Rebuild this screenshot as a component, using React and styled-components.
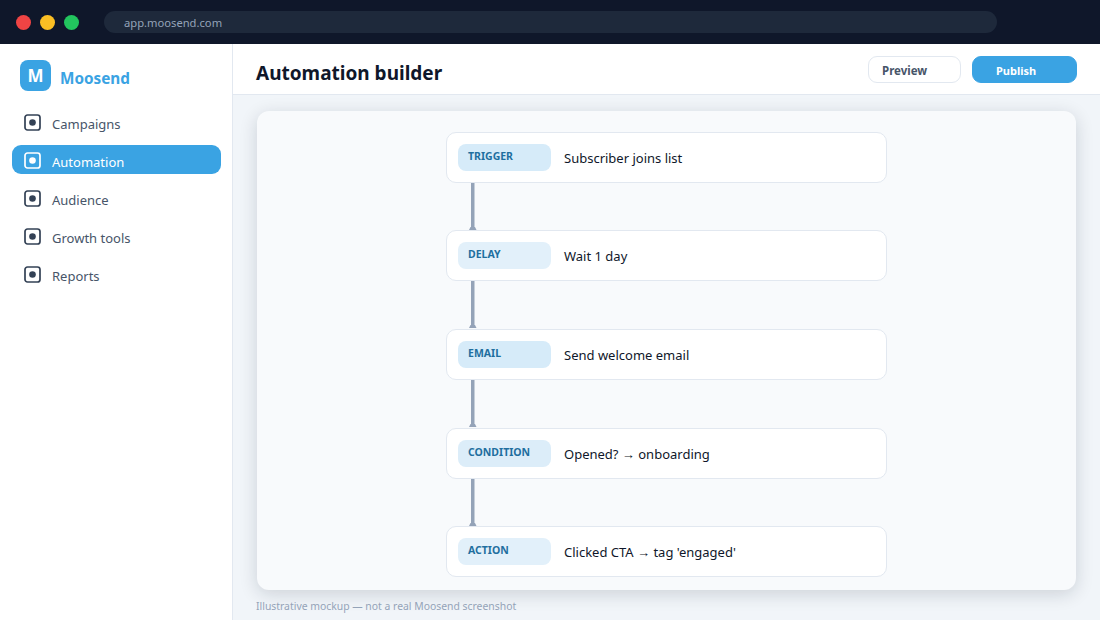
import React from 'react';
import styled, { createGlobalStyle } from 'styled-components';

const Global = createGlobalStyle`
  html, body { margin: 0; padding: 0; width: 1100px; height: 620px; overflow: hidden; background: #fff; }
  body { font-family: "Noto Sans", "Open Sans", sans-serif; }
  * { box-sizing: border-box; }
`;

const Page = styled.div`width: 1100px; height: 620px; display: flex; flex-direction: column;`;
const Chrome = styled.div`height: 44px; background: #0f172a; display: flex; align-items: center; padding: 0 103px 0 16px;`;
const Dots = styled.div`display: flex; gap: 9px; margin-right: 25px;`;
const Dot = styled.span`width: 15px; height: 15px; border-radius: 50%; background: ${p => p.$c};`;
const Url = styled.div`flex: 1; height: 22px; border-radius: 11px; background: #1e293b; color: #94a3b8; font-size: 11.2px; line-height: 24px; padding-left: 20px;`;
const Body = styled.div`flex: 1; display: flex; min-height: 0;`;
const Side = styled.aside`width: 233px; background: #fff; border-right: 1px solid #e2e8f0; padding: 16px 11px 0 12px; display: flex; flex-direction: column;`;
const Brand = styled.div`display: flex; align-items: center; gap: 9px; padding-left: 8px; height: 31px; margin-bottom: 16px;`;
const Logo = styled.div`width: 31px; height: 31px; border-radius: 8px; background: #3aa3e3; color: #fff; font-weight: 700; font-size: 17px; display: flex; align-items: center; justify-content: center; padding-bottom: 1px;`;
const BrandName = styled.div`color: #3aa3e3; font-weight: 700; font-size: 15.3px; padding-top: 4px;`;
const Nav = styled.nav`display: flex; flex-direction: column; gap: 9px;`;
const Item = styled.div`height: 29px; border-radius: 9px; display: flex; align-items: center; gap: 11px; padding-left: 12px; font-size: 13px; background: ${p => p.$active ? '#3aa3e3' : 'transparent'}; color: ${p => p.$active ? '#fff' : '#475569'};`;
const ItemLabel = styled.span`padding-top: 4px;`;
const IconSvg = styled.svg`width: 17px; height: 17px; flex: none; margin-top: 2px;`;
const Main = styled.main`flex: 1; display: flex; flex-direction: column; min-width: 0; background: #f1f5f9;`;
const Head = styled.header`height: 51px; background: #fff; border-bottom: 1px solid #e2e8f0; display: flex; align-items: center; padding: 0 23px 0 23px;`;
const Title = styled.h1`margin: 8px 0 0; flex: 1; font-size: 19px; font-weight: 700; color: #0f172a;`;
const Btn = styled.button`height: 27px; border-radius: 9px; font-family: inherit; font-weight: 700; text-align: left; padding: 3px 0 0 ${p => p.$primary ? '23px' : '13px'}; font-size: ${p => p.$primary ? '11px' : '11.5px'}; width: ${p => p.$primary ? '105px' : '93px'}; margin-left: ${p => p.$primary ? '11px' : '0'}; background: ${p => p.$primary ? '#3aa3e3' : '#fff'}; color: ${p => p.$primary ? '#fff' : '#475569'}; border: 1px solid ${p => p.$primary ? '#3aa3e3' : '#e2e8f0'};`;
const Canvas = styled.div`flex: 1; padding: 16px 24px 0 24px; display: flex; flex-direction: column; min-height: 0;`;
const Board = styled.section`height: 479px; border-radius: 12px; background: #f8fafc; box-shadow: 0 4px 18px rgba(15, 23, 42, .16); display: flex; flex-direction: column; align-items: center; justify-content: space-between; padding: 20.9px 0 12.9px;`;
const Node = styled.div`width: 441px; height: 51px; flex: none; background: #fff; border: 1px solid #e2e8f0; border-radius: 10px; display: flex; align-items: center; padding-left: 11px; gap: 13px; position: relative;`;
const Tag = styled.span`width: 93px; height: 27px; border-radius: 8px; background: ${p => p.$bg}; color: #1f6f9f; font-size: 10.5px; font-weight: 700; padding: 5px 0 0 10px; line-height: 15px;`;
const Label = styled.span`font-size: 13px; color: #0f172a; padding-top: 1px;`;
const Wire = styled.svg`position: absolute; left: 21px; top: 50px; width: 10px; height: 47px;`;
const Note = styled.div`font-size: 10.4px; color: #94a3b8; padding-top: 9px; margin-left: -1px;`;

const Icon = ({ active }) => {
  const c = active ? '#fff' : '#334155';
  return (
    <IconSvg viewBox="0 0 17 17">
      <rect x="1" y="1" width="15" height="15" rx="2.5" fill="none" stroke={c} strokeWidth="1.7" />
      <circle cx="8.5" cy="8.5" r="3.3" fill={c} />
    </IconSvg>
  );
};

const nav = ['Campaigns', 'Automation', 'Audience', 'Growth tools', 'Reports'];
const steps = [
  ['TRIGGER', 'Subscriber joins list', '#d6ebf9'],
  ['DELAY', 'Wait 1 day', '#e2f0fa'],
  ['EMAIL', 'Send welcome email', '#d6ebf9'],
  ['CONDITION', 'Opened? → onboarding', '#dcedf9'],
  ['ACTION', "Clicked CTA → tag 'engaged'", '#e2f0fa'],
];

export default function App() {
  return (
    <Page>
      <Global />
      <Chrome>
        <Dots>
          <Dot $c="#ef4444" />
          <Dot $c="#fbbf24" />
          <Dot $c="#22c55e" />
        </Dots>
        <Url>app.moosend.com</Url>
      </Chrome>
      <Body>
        <Side>
          <Brand>
            <Logo>M</Logo>
            <BrandName>Moosend</BrandName>
          </Brand>
          <Nav>
            {nav.map(n => (
              <Item key={n} $active={n === 'Automation'}>
                <Icon active={n === 'Automation'} />
                <ItemLabel>{n}</ItemLabel>
              </Item>
            ))}
          </Nav>
        </Side>
        <Main>
          <Head>
            <Title>Automation builder</Title>
            <Btn>Preview</Btn>
            <Btn $primary>Publish</Btn>
          </Head>
          <Canvas>
            <Board>
              {steps.map((s, i) => (
                <Node key={s[0]}>
                  <Tag $bg={s[2]}>{s[0]}</Tag>
                  <Label>{s[1]}</Label>
                  {i < steps.length - 1 && (
                    <Wire viewBox="0 0 10 47">
                      <rect x="3" y="0" width="3.5" height="45" fill="#94a3b8" />
                      <polygon points="2.5,44 7,44 8.5,47 1,47" fill="#94a3b8" />
                    </Wire>
                  )}
                </Node>
              ))}
            </Board>
            <Note>Illustrative mockup — not a real Moosend screenshot</Note>
          </Canvas>
        </Main>
      </Body>
    </Page>
  );
}
